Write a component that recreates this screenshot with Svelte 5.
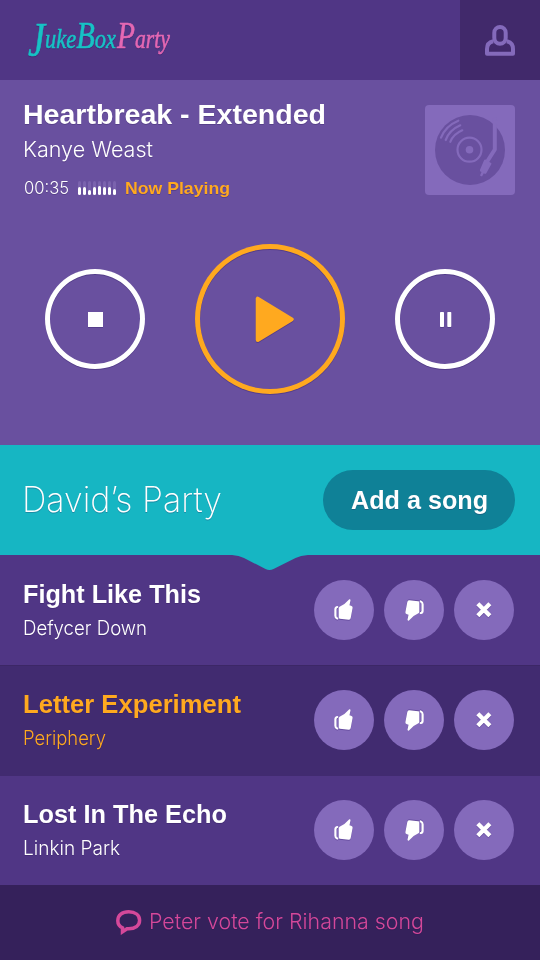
<script lang="ts">
	let songs = [
		{ title: 'Fight Like This', artist: 'Defycer Down', titleWidth: 178, artistWidth: 124, active: false },
		{ title: 'Letter Experiment', artist: 'Periphery', titleWidth: 218, artistWidth: 83, active: true },
		{ title: 'Lost In The Echo', artist: 'Linkin Park', titleWidth: 204, artistWidth: 97, active: false }
	];

	let levels = [8, 8, 5, 8, 9, 8, 8, 6];
</script>

{#snippet line(text: string, width: number, size: number, kind: string)}
	<svg class="line {kind}" width={width + 6} height={Math.round(size * 1.3)} font-size={size}>
		<text x="0" y={size} textLength={width} lengthAdjust="spacingAndGlyphs">{text}</text>
	</svg>
{/snippet}

{#snippet thumb(down: boolean)}
	<svg viewBox="0 0 60 60" class:down>
		<path d="M35.3 19.3q1.3-.2 1.2 1.100l-1 4.800 2 .7q1.400.6 1.100 2.200l-1.900 10q-.3 1.800-2 1.600l-8.900-.9q-1.100-.1-1.100-1.200V28.300q0-1 .9-1.500l4.800-2.700z" />
		<path class="cuff" d="M23.200 27q-1.800.4-1.800 2.600v6.100q0 2.200 1.800 2.800" />
	</svg>
{/snippet}

<div class="app">
	<header>
		<svg class="logo" viewBox="0 0 152 48" role="img" aria-label="JukeBoxParty">
			<text class="teal" x="4" y="30" textLength="88" lengthAdjust="spacingAndGlyphs"><tspan class="hook" dy="8">J</tspan><tspan dy="-8">uke</tspan><tspan class="cap">B</tspan><tspan>ox</tspan></text>
			<text class="pink" x="93" y="30" textLength="53" lengthAdjust="spacingAndGlyphs"><tspan class="cap">P</tspan><tspan>arty</tspan></text>
		</svg>
		<button class="user" aria-label="Profile">
			<svg viewBox="0 0 30 31">
				<rect x="9.3" y="2" width="11.4" height="16.8" rx="5.7" />
				<path d="M8.2 16.2Q2 17.5 2 24v4.7h26V24q0-6.5-6.2-7.8" />
			</svg>
		</button>
	</header>

	<section class="player">
		<div class="track">
			<div class="info">
				{@render line('Heartbreak - Extended', 303, 27, 'bold')}
				<div class="artist">{@render line('Kanye Weast', 130, 22, 'light')}</div>
				<div class="status">
					{@render line('00:35', 45, 17, 'light')}
					<div class="levels">
						{#each levels as level}
							<i><b style="height: {level}px"></b></i>
						{/each}
					</div>
					<div class="now">{@render line('Now Playing', 105, 17, 'bold')}</div>
				</div>
			</div>
			<svg class="cover" viewBox="0 0 90 90">
				<rect class="tile" width="90" height="90" rx="4" />
				<circle class="disc" cx="45" cy="45" r="35" />
				<g class="groove">
					<path d="M16 32.7Q20.5 21 33.3 15.7M20.7 35Q24.5 25 35.3 20.3M25.3 36.8Q28.5 29 37.3 25.3" />
					<circle cx="44.5" cy="44.7" r="12" />
				</g>
				<circle class="tile" cx="44.5" cy="44.7" r="3.8" />
				<path class="arm" d="M69.8 14v30.5L62.5 56" />
				<path class="tile" d="m67 16 8 5.5V15z" />
				<path class="tile" d="m60.5 54.5 5.5 3.5q.8.5.3 1.3l-5 9-1.2.6-1.3-.7-1.8 3.3-2-1.1 1.5-3.3-1.4-.8-.2-1.2 4.3-10q.4-1 1.3-.6z" />
			</svg>
		</div>

		<div class="controls">
			<button class="round" aria-label="Stop">
				<svg viewBox="0 0 100 100"><rect x="43" y="43" width="15" height="15" /></svg>
			</button>
			<button class="round play" aria-label="Play">
				<svg viewBox="0 0 150 150"><path d="M62.7 54.7v41.4L96.8 75.4z" /></svg>
			</button>
			<button class="round" aria-label="Pause">
				<svg viewBox="0 0 100 100">
					<rect x="45" y="43" width="4" height="15" rx=".7" />
					<rect x="52.3" y="43" width="4" height="15" rx=".7" />
				</svg>
			</button>
		</div>
	</section>

	<section class="party">
		{@render line('David’s Party', 200, 35, 'thin')}
		<button class="add">{@render line('Add a song', 137, 25, 'bold')}</button>
		<svg class="notch" viewBox="0 0 76 16">
			<path d="M0 0q7 .3 12 3l21.5 11q4 2 8 0L63.5 3q5-2.7 12.5-3z" />
		</svg>
	</section>

	<div class="queue">
		{#each songs as song}
			<div class="song" class:active={song.active}>
				<div class="song-info">
					{@render line(song.title, song.titleWidth, 25, 'bold')}
					<div class="song-artist">{@render line(song.artist, song.artistWidth, 20, 'light')}</div>
				</div>
				<div class="actions">
					<button aria-label="Vote up">{@render thumb(false)}</button>
					<button aria-label="Vote down">{@render thumb(true)}</button>
					<button aria-label="Remove">
						<svg viewBox="0 0 60 60"><path class="cross" d="m24.3 24.3 11 11m0-11-11 11" /></svg>
					</button>
				</div>
			</div>
		{/each}
	</div>

	<footer>
		<svg class="bubble" viewBox="0 0 26 25">
			<path d="M6.5 17.8C3.5 16.5 1.8 13.7 1.8 10.800 1.8 5 6.2 1.800 12.700 1.800S23.600 5 23.600 10.300s-4.600 8.500-10.900 8.500H11l-4.500 3z" />
		</svg>
		<div class="message">{@render line('Peter vote for Rihanna song', 275, 22, 'light')}</div>
	</footer>
</div>

<style>
	:global(body) {
		margin: 0;
		background: #35215b;
	}

	.app {
		width: 540px;
		height: 960px;
		display: flex;
		flex-direction: column;
		overflow: hidden;
		color: #fff;
		font-family: 'Liberation Sans', Arial, sans-serif;
	}

	button {
		padding: 0;
		border: 0;
		color: inherit;
		background: none;
		font: inherit;
	}

	svg {
		display: block;
		flex: none;
		fill: currentColor;
	}

	.line {
		overflow: visible;
		filter: drop-shadow(0 1px 0 rgba(35, 15, 75, 0.25));
	}

	.bold {
		font-family: 'Liberation Sans', Arial, sans-serif;
		font-weight: 700;
	}

	.light {
		font-family: Inter, 'Liberation Sans', sans-serif;
		font-weight: 300;
	}

	.thin {
		font-family: Inter, 'Liberation Sans', sans-serif;
		font-weight: 200;
	}

	header {
		height: 80px;
		display: flex;
		justify-content: space-between;
		background: #503685;
	}

	.logo {
		width: 152px;
		height: 48px;
		margin: 18px 0 0 24px;
		overflow: visible;
		font: italic 28px 'Liberation Serif', serif;
		stroke-width: 0.6;
		filter: drop-shadow(0 1px 0 rgba(35, 15, 75, 0.3));
	}

	.cap {
		font-size: 38px;
	}

	.hook {
		font-size: 48px;
	}

	.teal {
		fill: #17c2c5;
		stroke: #17c2c5;
	}

	.pink {
		fill: #e468b3;
		stroke: #e468b3;
	}

	.user {
		width: 80px;
		display: flex;
		align-items: center;
		justify-content: center;
		background: #41296b;
	}

	.user svg {
		width: 30px;
		height: 31px;
		fill: none;
		stroke: #846abb;
		stroke-width: 4;
		stroke-linejoin: round;
	}

	.player {
		height: 365px;
		background: #69509f;
	}

	.track {
		height: 164px;
		display: flex;
		justify-content: space-between;
		box-sizing: border-box;
		padding: 17px 25px 0 23px;
	}

	.artist {
		margin-top: 3px;
	}

	.status {
		display: flex;
		margin-top: 13px;
		padding-left: 1px;
	}

	.levels {
		display: flex;
		gap: 2px;
		margin: 4px 0 0 3px;
	}

	.levels i {
		width: 3px;
		height: 14px;
		display: flex;
		align-items: flex-end;
		border-radius: 1.5px;
		background: #7b63ae;
	}

	.levels b {
		width: 3px;
		border-radius: 1.5px;
		background: #fff;
	}

	.now {
		margin-left: 9px;
		color: #ffa91f;
	}

	.cover {
		width: 90px;
		height: 90px;
		margin-top: 8px;
	}

	.tile {
		fill: #846abb;
	}

	.disc {
		fill: #69509f;
	}

	.groove,
	.arm {
		fill: none;
		stroke: #846abb;
		stroke-width: 2.2;
		stroke-linecap: round;
	}

	.arm {
		stroke-width: 4;
		stroke-linejoin: round;
	}

	.controls {
		display: flex;
		align-items: center;
		justify-content: center;
		gap: 50px;
	}

	.round {
		width: 100px;
		height: 100px;
		border-radius: 50%;
		box-shadow: inset 0 0 0 5px #fff;
		filter: drop-shadow(0 1px 0 rgba(45, 25, 100, 0.35));
	}

	.play {
		width: 150px;
		height: 150px;
		color: #ffa91f;
		box-shadow: inset 0 0 0 5px #ffa91f;
	}

	.play path {
		stroke: currentColor;
		stroke-width: 4;
		stroke-linejoin: round;
	}

	.party {
		position: relative;
		z-index: 1;
		height: 110px;
		display: flex;
		align-items: center;
		justify-content: space-between;
		box-sizing: border-box;
		padding: 0 25px 0 22px;
		background: #16b6c3;
	}

	.add {
		width: 192px;
		height: 60px;
		display: flex;
		align-items: center;
		padding-left: 28px;
		border-radius: 30px;
		background: #0f8197;
	}

	.notch {
		position: absolute;
		top: 110px;
		left: 232px;
		width: 76px;
		height: 16px;
		color: #16b6c3;
	}

	.queue {
		height: 330px;
		background: #503685;
	}

	.song {
		height: 110px;
		display: flex;
		justify-content: space-between;
		box-sizing: border-box;
		padding: 25px 26px 0 23px;
	}

	.song.active {
		color: #ffa91f;
		background: #412b70;
		box-shadow: 0 1px 0 #412b70, inset 0 1px 0 #3c2766;
	}

	.song-info {
		margin-top: -2px;
	}

	.song-artist {
		margin-top: 4px;
	}

	.actions {
		display: flex;
		gap: 10px;
	}

	.actions button {
		width: 60px;
		height: 60px;
		border-radius: 50%;
		color: #fff;
		background: #846abb;
	}

	.actions svg {
		filter: drop-shadow(0 1px 0 rgba(60, 35, 120, 0.4));
	}

	.down {
		transform: rotate(180deg);
	}

	.cuff {
		fill: none;
		stroke: currentColor;
		stroke-width: 2.2;
		stroke-linecap: round;
	}

	.cross {
		stroke: currentColor;
		stroke-width: 5.2;
		stroke-linecap: square;
		transform: translate(30px, 30px) scale(0.82) translate(-30px, -30px);
	}

	footer {
		height: 75px;
		display: flex;
		align-items: center;
		box-sizing: border-box;
		padding-left: 116px;
		color: #d5489a;
		background: #35215b;
	}

	.bubble {
		width: 26px;
		height: 25px;
		margin-right: 7px;
		fill: none;
		stroke: currentColor;
		stroke-width: 3.5;
		stroke-linejoin: miter;
	}

	.message {
		margin-bottom: 2px;
	}
</style>
